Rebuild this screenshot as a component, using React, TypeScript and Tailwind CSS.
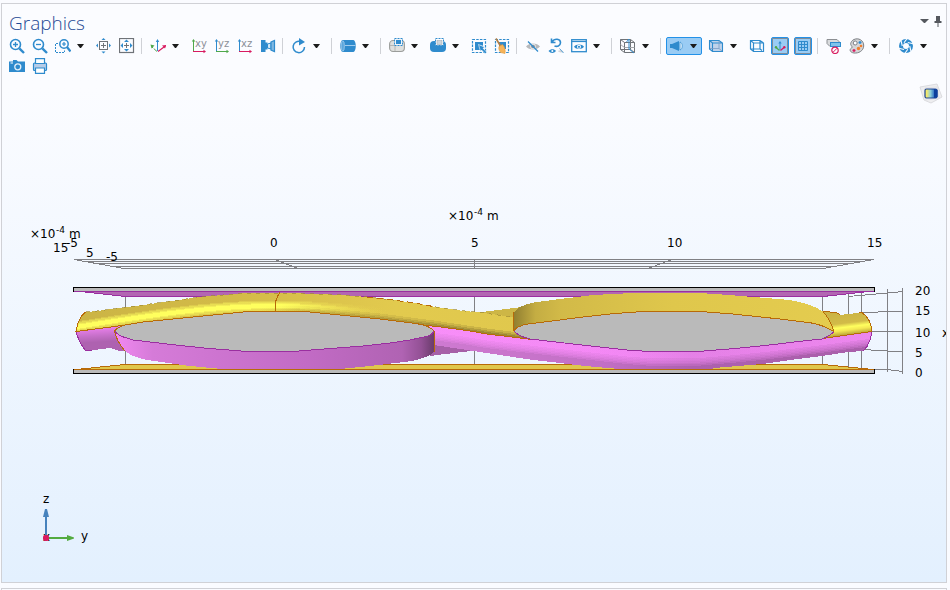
import type { ReactNode } from "react";

const BLUE = "#2f8bcd";
const GRAY = "#6f7378";
const GREEN = "#4fa84a";
const PINK = "#d81b60";

function Icon({ children }: { children: ReactNode }) {
  return (
    <svg viewBox="0 0 16 16" className="block size-4 shrink-0" fill="none" aria-hidden="true">
      {children}
    </svg>
  );
}

function Caret() {
  return (
    <svg viewBox="0 0 7 4" className="block h-1 w-[7px]" aria-hidden="true">
      <path d="M0 0H7L4 4H3Z" fill="#1c1c1c" />
    </svg>
  );
}

function Tool({ label, children }: { label: string; children: ReactNode }) {
  return (
    <button type="button" aria-label={label} className="flex h-5 w-[23px] items-center justify-center">
      {children}
    </button>
  );
}

function Split({ label, children }: { label: string; children: ReactNode }) {
  return (
    <div className="flex">
      <Tool label={label}>{children}</Tool>
      <button type="button" aria-label={`${label} options`} className="flex h-5 w-[18px] items-center pl-[3px]">
        <Caret />
      </button>
    </div>
  );
}

function Toggle({ label, children }: { label: string; children: ReactNode }) {
  return (
    <button type="button" aria-label={label} aria-pressed="true" className="flex h-5 w-[23px] items-center justify-center">
      <span className="flex size-[18px] items-center justify-center rounded-[2px] border border-[#2391e8] bg-[#9accf4]">
        {children}
      </span>
    </button>
  );
}

function Separator() {
  return (
    <div className="flex h-5 w-2 items-center pl-[3px]">
      <div className="h-4 w-px bg-[#cfd1d6]" />
    </div>
  );
}

function Lens({ minus }: { minus?: boolean }) {
  return (
    <>
      <circle cx="6.5" cy="6.5" r="5" stroke={BLUE} strokeWidth="1.6" />
      <path d="M10.3 10.3L15 15" stroke={BLUE} strokeWidth="2.4" />
      <path d={minus ? "M4 6.5H9" : "M4 6.5H9M6.5 4V9"} stroke={BLUE} strokeWidth="1.3" />
    </>
  );
}

function PlaneAxes({ name, up, across }: { name: string; up: string; across: string }) {
  return (
    <svg viewBox="0 0 16 16" className="block size-4 overflow-visible" fill="none" aria-hidden="true">
      <path d="M2.5 13V2" stroke={up} />
      <path d="M0.8 3.5L2.5 1L4.2 3.5Z" fill={up} />
      <path d="M2 13.5H14" stroke={across} />
      <path d="M12.5 11.8L15 13.5L12.5 15.2Z" fill={across} />
      <text x="4" y="9" fontSize="10" fontFamily="DejaVu Sans, sans-serif" fill="#8b9097">
        {name}
      </text>
    </svg>
  );
}

function Toolbar() {
  return (
    <div role="toolbar" aria-label="Graphics toolbar" className="flex flex-wrap pl-[3px]">
      <Tool label="Zoom in">
        <Icon><Lens /></Icon>
      </Tool>
      <Tool label="Zoom out">
        <Icon><Lens minus /></Icon>
      </Tool>
      <Split label="Zoom box">
        <Icon>
          <path d="M3 5.5H0.5V14.5H9.5V12.5" stroke={BLUE} strokeDasharray="2 1" />
          <circle cx="9" cy="6" r="4.2" stroke={BLUE} strokeWidth="1.5" />
          <path d="M12 9L15.5 13.5" stroke={BLUE} strokeWidth="2.2" />
          <path d="M7 6H11M9 4V8" stroke={BLUE} strokeWidth="1.2" />
        </Icon>
      </Split>
      <Tool label="Zoom selected">
        <Icon>
          <rect x="3.5" y="3.5" width="8" height="8" stroke={GRAY} />
          <path d="M5 7.5H10M7.5 5V10" stroke={GRAY} />
          <path d="M5.500 2L7.500 0L9.500 2ZM5.500 13.500H9.500L7.500 15.500ZM2 5.500L0 7.500L2 9.500ZM13 5.500L15 7.500L13 9.500Z" fill={BLUE} />
        </Icon>
      </Tool>
      <Tool label="Zoom extents">
        <Icon>
          <rect x="0.5" y="0.5" width="14" height="14" stroke={GRAY} strokeWidth="1.2" />
          <path d="M5 7.500H10M7.500 5V10" stroke={GRAY} />
          <path d="M5 4L7.500 1.500L10 4ZM5 11H10L7.500 13.500ZM4 5L1.500 7.500L4 10ZM11 5L13.500 7.500L11 10Z" fill={BLUE} />
        </Icon>
      </Tool>
      <Separator />
      <Split label="Default view">
        <Icon>
          <path d="M7.5 13V3" stroke={BLUE} />
          <path d="M5.8 4L7.5 1L9.2 4Z" fill={BLUE} />
          <path d="M7 13.500L2 9" stroke={GREEN} strokeDasharray="4 1" />
          <path d="M0.5 6.5L4.5 7.5L1.5 10.5Z" fill={GREEN} />
          <path d="M8 13.500L14 9" stroke={PINK} strokeWidth="1.2" />
          <path d="M16.5 6.8L15 10.5L12 7.5Z" fill={PINK} />
        </Icon>
      </Split>
      <Tool label="XY view"><PlaneAxes name="xy" up={GREEN} across={PINK} /></Tool>
      <Tool label="YZ view"><PlaneAxes name="yz" up={BLUE} across={GREEN} /></Tool>
      <Tool label="XZ view"><PlaneAxes name="xz" up={BLUE} across={PINK} /></Tool>
      <Tool label="View camera">
        <Icon>
          <path d="M1 2H5.500V4.500H7.500V11.500H5.500V14H1Z" fill={BLUE} />
          <path d="M7.500 6L11 5V11L7.500 10Z" fill="#d3e8f7" stroke={BLUE} />
          <path d="M11 4L14.500 2.500V13.500L11 12Z" fill="#7fb8e2" stroke={BLUE} strokeWidth="1.2" />
        </Icon>
      </Tool>
      <Separator />
      <Split label="Rotate">
        <Icon>
          <path d="M9.500 3.500A5.700 5.700 0 1 0 13.500 9" stroke={BLUE} strokeWidth="1.500" />
          <path d="M8 0L14 4L8 7.500Z" fill={BLUE} />
        </Icon>
      </Split>
      <Separator />
      <Split label="Select objects">
        <Icon>
          <path d="M2.500 2H13.500C16.500 3 16.500 13 13.500 14H2.500C-0.500 13 -0.500 3 2.500 2Z" fill={BLUE} />
          <ellipse cx="2.8" cy="8" rx="1.6" ry="5.3" fill="#5ba6dc" stroke="#a9d1ef" strokeWidth="0.7" />
          <path d="M5 7.5H15.5" stroke="#9fcbed" />
        </Icon>
      </Split>
      <Separator />
      <Split label="Select box">
        <Icon>
          <rect x="0.600" y="2.500" width="14.800" height="11" rx="3.500" fill="#dfe0de" stroke="#9b9d9b" strokeWidth="1.1" />
          <path d="M1 7.500H6V13" stroke="#b4b6b4" />
          <rect x="5.500" y="0.500" width="8" height="7" fill="#eef4f9" stroke={BLUE} strokeDasharray="2 1" />
          <rect x="7" y="2" width="5" height="4" fill={BLUE} />
        </Icon>
      </Split>
      <Split label="Select domains">
        <Icon>
          <rect x="0" y="3" width="16" height="11" rx="4" fill={BLUE} />
          <rect x="5.500" y="0.500" width="8" height="7" fill="#fff" stroke={BLUE} strokeDasharray="2 1" />
          <rect x="7" y="2.500" width="5" height="4" fill="#cfd6dc" stroke="#a3adb5" strokeWidth="0.600" />
        </Icon>
      </Split>
      <Tool label="Select and add">
        <Icon>
          <rect x="1.5" y="1.5" width="13" height="13" stroke={BLUE} strokeWidth="1.2" strokeDasharray="2.5 1.2" />
          <path d="M4 4H12V8L8 7L10 12H4Z" fill={BLUE} />
          <path d="M7.500 6.500L14 9.200L12 10.200L15.800 14.200L14.200 15.800L10.500 12L9.500 13.500Z" fill={BLUE} stroke="#fff" strokeWidth="0.600" />
        </Icon>
      </Tool>
      <Tool label="Clear selection">
        <Icon>
          <rect x="1.5" y="1.5" width="13" height="13" stroke={BLUE} strokeWidth="1.2" strokeDasharray="2.5 1.2" />
          <rect x="5" y="4" width="7" height="7" fill={BLUE} />
          <path d="M2 0.5L6.500 8" stroke="#b47f45" strokeWidth="1.700" />
          <path d="M5 8.500L8.500 6.500C11 9 11.500 12 11 15.500L6.500 14.500C5 12 4.500 11 5 8.500Z" fill="#f6b45a" stroke="#e09a3e" strokeWidth="0.6" />
        </Icon>
      </Tool>
      <Separator />
      <Tool label="Hide">
        <Icon>
          <path d="M1 8.5C4 4.5 12 4.5 15 8.5C12 12.5 4 12.5 1 8.5Z" fill="#b7b9bc" />
          <circle cx="8" cy="8.5" r="2.4" fill="#8e9195" stroke="#f2f3f5" />
          <path d="M3 3.5L13 13.5" stroke={BLUE} strokeWidth="1.2" />
        </Icon>
      </Tool>
      <Tool label="Reset hiding">
        <Icon>
          <path d="M3.500 0.500V4.500H7.500M4 4C6.500 0 12.500 0.500 12.500 4.800C12.300 8.200 9 9 6.500 8" stroke={BLUE} strokeWidth="1.600" />
          <path d="M0.5 13C2.5 10.5 6.5 10.5 8 13C6 15.5 2.5 15.5 0.5 13Z" fill={BLUE} />
          <circle cx="4.300" cy="13" r="1" fill="#fff" />
          <path d="M10 13C11 11.800 14 11.800 15.500 13.500C14 14.800 11 14.800 10 13Z" fill="#d3d5d8" />
          <path d="M11.500 10.500L15.500 15" stroke={BLUE} strokeWidth="0.800" />
        </Icon>
      </Tool>
      <Split label="View hidden">
        <Icon>
          <rect x="0.7" y="1.7" width="14.6" height="12" stroke={BLUE} strokeWidth="1.3" />
          <path d="M0.5 3.5H15.5" stroke={BLUE} strokeWidth="1.2" />
          <path d="M3 8.8C5 5.8 11 5.8 13 8.8C11 11.8 5 11.8 3 8.8Z" fill={BLUE} />
          <circle cx="8" cy="8.8" r="2" fill="#fff" />
          <circle cx="8" cy="8.8" r="1.1" fill={BLUE} />
        </Icon>
      </Split>
      <Separator />
      <Split label="Clipping">
        <Icon>
          <path d="M0.500 1.500H10.500V11.500H0.500ZM4.500 4.500H14.500V14.500H4.500ZM0.500 1.500L4.500 4.500M10.500 1.500L14.500 4.500M10.500 11.500L14.500 14.500M0.500 11.500L4.500 14.500" stroke={GRAY} />
          <path d="M0.500 6.500L4.500 9.500H14.500" stroke="#a5a8ac" />
          <path d="M6.500 4L9 1V11L14 15" stroke={BLUE} />
        </Icon>
      </Split>
      <Separator />
      <div className="mt-px mr-0.5 ml-px flex h-[18px] w-9 rounded-[2px] border border-[#2391e8] bg-[#9accf4]">
        <button type="button" aria-label="Scene light" aria-pressed="true" className="flex w-5 items-center justify-center">
          <Icon>
            <path d="M1 6H3L10 3V13L3 10H1Z" fill={BLUE} />
            <path d="M11 4C14 5 14 11 11 12Z" fill="#e8f4fd" stroke={BLUE} strokeWidth="0.7" />
          </Icon>
        </button>
        <button type="button" aria-label="Scene light options" className="flex flex-1 items-center pl-[3px]">
          <Caret />
        </button>
      </div>
      <Split label="Transparency">
        <Icon>
          <path d="M1 2.5H11L14.5 5V13.5H4.5L1 11Z" fill="#bfd2ea" />
          <path d="M1.5 2.5H11L14.5 5V13.5H4.5L1.5 11ZM1.5 2.5L4.5 5H14.5M4.5 5V13.5" stroke={BLUE} strokeWidth="1.1" />
          <path d="M2 10.5H11V3M11 10.5L14 13" stroke="#7a9cc4" strokeWidth="0.8" />
        </Icon>
      </Split>
      <Tool label="Wireframe rendering">
        <Icon>
          <path d="M1.5 2.5H11L14.5 5V13.5H4.5L1.5 11ZM1.5 2.5L4.5 5H14.5M4.5 5V13.5M1.5 11H11V2.5M11 11L14.5 13.5" stroke={BLUE} strokeWidth="1.2" />
        </Icon>
      </Tool>
      <Toggle label="Show axis orientation">
        <Icon>
          <rect x="0.5" y="0.5" width="15" height="15" stroke="#7e8c9a" />
          <path d="M8 12V5" stroke={BLUE} />
          <path d="M6.3 5.5L8 3L9.7 5.5Z" fill={BLUE} />
          <path d="M7.5 12.5L4 9.5" stroke={GREEN} strokeWidth="1.2" />
          <circle cx="4" cy="9.3" r="1.2" fill={GREEN} />
          <path d="M8.5 12.5L12 9.5" stroke={PINK} strokeWidth="1.2" />
          <circle cx="12.3" cy="9.3" r="1.2" fill={PINK} />
        </Icon>
      </Toggle>
      <Toggle label="Show grid">
        <Icon>
          <rect x="0.5" y="0.5" width="15" height="15" stroke="#7e8c9a" />
          <path d="M3.5 3.5H12.5V12.5H3.5ZM6.5 3.5V12.5M9.5 3.5V12.5M3.5 6.5H12.5M3.5 9.5H12.5" stroke={BLUE} />
        </Icon>
      </Toggle>
      <Separator />
      <Tool label="Disable plot">
        <Icon>
          <path d="M1 1.5H11L14 4.5V8.5H4L1 5.5Z" fill="#d9dbdd" stroke="#8c8f93" />
          <rect x="4.500" y="4.500" width="10" height="4" fill="#7ec4ec" stroke={BLUE} />
          <circle cx="9" cy="12.3" r="3.2" fill="#fff" stroke={PINK} strokeWidth="1.2" />
          <path d="M7 14.3L11 10.3" stroke={PINK} />
        </Icon>
      </Tool>
      <Split label="Colour theme">
        <Icon>
          <path d="M5 1.5C9 -0.5 15 2 14.7 8C14.4 13 9.5 15.5 5 15C1 14.5 0 11.5 2.5 10C4.5 8.5 0.5 7.5 2 4.5C2.7 3 3.5 2.2 5 1.5Z" fill="#d5d6d8" stroke="#7d8085" />
          <circle cx="6.2" cy="5" r="2" fill="#fff" stroke="#7d8085" />
          <path d="M11 3V6M9.5 4.5H12.5" stroke={BLUE} strokeWidth="1.3" />
          <circle cx="9.5" cy="10.5" r="1.7" fill="#f07f2e" />
          <circle cx="12" cy="8" r="1.3" fill="#f07f2e" />
          <path d="M5 11V14M3.5 12.5H6.5" stroke={PINK} strokeWidth="1.3" />
        </Icon>
      </Split>
      <Separator />
      <Split label="Image snapshot">
        <Icon>
          <circle cx="8" cy="8" r="5" stroke={BLUE} strokeWidth="4" />
          <path d="M6 4.8L9.5 0M9.8 4.5L15.2 5.8M11.7 8L13 13.5M9.8 11.2L6.5 16M6 11.5L0.8 10.2M4.3 8L3 2.5" stroke="#fbfcff" strokeWidth="1.1" />
        </Icon>
      </Split>
      <Tool label="Snapshot">
        <Icon>
          <path d="M0 3.5H4V2H7.5L9 3.5H16V14H0Z" fill={BLUE} />
          <circle cx="8.8" cy="8.8" r="3" stroke="#e2f0fa" strokeWidth="1.3" />
          <path d="M1.5 5H4" stroke="#fff" />
        </Icon>
      </Tool>
      <Tool label="Print">
        <Icon>
          <rect x="1.5" y="5" width="13" height="7.5" rx="1" fill="#b7cde8" stroke={BLUE} strokeWidth="1.2" />
          <path d="M3.5 0.7H12.5V5.5H3.5ZM3.5 10H12.5V15.3H3.5Z" fill="#fff" stroke={BLUE} strokeWidth="1.2" />
        </Icon>
      </Tool>
    </div>
  );
}

const ARCH_ONE_TOP = "M86 312L97 311L143 305L200 297L240 293.5L260 293H290L303 293.5L343 295L367 297L393 300L415 303L433 306.5L460 310.5L480 312.5L513 317";
const LENS_ONE_TOP = "M114.5 331Q117 327.500 125 325L143 322L190 317.300L223 314L243 312L267 311H300L320 313L340 315L380 319L410 322.700L423 324.700Q431 327.500 434 331";
const LENS_ONE_BOTTOM = "M114.500 331Q118 335 122 336.500L133 340L173 344.700L207 348.300L245 351.300H295L333 348.300L363 346L388 343.300L410 340L427 336.300Q433 334 434 331";
const LENS_TWO_TOP = "M514 331Q515 328.500 518 327Q523 324.500 530 323.700L560 320L580 317.300L613 313.700L643 311.500H700L733 314L777 318.700L810 322.700Q822 324.500 834 331.500";
const LENS_TWO_BOTTOM = "M514 331Q518 336 530 339L567 343.300L603 347.300L627 350L647 351.300H700L733 348.700L767 345.300L800 341.300L822 339Q830 336 834 331.500";
const ARM_TOP = "M423 325L437 326.500L467 330.500L487 334L512 337L530 339L567 343.300L603 347.300L627 350L647 351.500H700L733 348.700L767 345.300L800 341.300L823 338.500L872 332";
const ARM_SHAPE = "M423 325L437 326.500L467 330.500L487 334L512 337L530 339L567 343.300L603 347.300L627 350L647 351.500H700L733 348.700L767 345.300L800 341.300L823 338.500L872 332L870 340L867 346.500L863 351L848 352L822 356L790 360L762 364L720 367.500L705 369.500H625L585 366L560 363L533 360L480 352L434 345V331Z";
const ARCH_ONE_SHAPE = "M86 312L97 311L143 305L200 297L240 293.500L260 293H290L303 293.500L343 295L367 297L393 300L415 303L433 306.500L460 310.500L480 312.500L513 317L514 331Q520 336 532 339L512 337L487 334L467 330.500L437 326.500L410 322.700L380 319L340 315L300 311H267L243 312L223 314L190 317.300L143 322L125 325L113 326.700L76 331.500L78 323Q81 315 86 312Z";
const ARCH_ONE_RIDGE = "M70 328C140 317 205 306 276 306C340 306 400 315 530 331";
const ARCH_ONE_SHADE = "M240 311H300L340 315L380 319L437 326.500L487 334L535 340";

function Woven() {
  return (
    <g>
      {/* inner faces of the plates */}
      <path d="M76 291L125 296.500H823L873 291Z" fill="#b266b2" stroke="#9a2fa0" />
      <path d="M76 369.500L125 364.500H823L873 369.500Z" fill="#dfc74c" stroke="#b86a08" />

      {/* far ends of the fibres */}
      <path d="M478 312.500L522 307V322H513V317Z" fill="#cdb646" />
      <path d="M434 345L475 350.500L437 355L430 356Z" fill="#a660a8" />

      {/* violet fibre, left end */}
      <path d="M76 331.500L122 325L114.500 331Q116 342 125 351L118 350.500L110 348L86 351Q79 343 76 331.500Z" fill="url(#violetEnd)" />
      <path d="M76 331.500Q79 343 86 351L92 350.500" fill="none" stroke="#9a2fa0" />

      {/* violet fibre crossing to the right */}
      <path d={ARM_SHAPE} fill="url(#violetArm)" />
      <g clipPath="url(#armClip)" fill="none" stroke="url(#violetGlow)" strokeOpacity="0.22">
        <path d={ARM_TOP} strokeWidth="28" />
        <path d={ARM_TOP} strokeWidth="25" />
        <path d={ARM_TOP} strokeWidth="22" />
        <path d={ARM_TOP} strokeWidth="19" />
        <path d={ARM_TOP} strokeWidth="16" />
        <path d={ARM_TOP} strokeWidth="13" strokeOpacity="0.5" />
      </g>
      <path d="M872 332L870 340L867 346.500L863 351" fill="none" stroke="#9a2fa0" />

      {/* violet arch under the left lens */}
      <path
        d="M114.500 331L117 338Q120 346 125 351Q132 357 147 360L173 363.700L187 365.700L222 369H340L370 366L393 363.300L410 361.300Q428 358 434 352V331Z"
        fill="url(#violetBelly)"
      />
      <path d={LENS_ONE_TOP} fill="#bababa" />
      <path d={LENS_ONE_BOTTOM} fill="#bababa" stroke="#9a2fa0" />

      {/* yellow fibre, left to centre */}
      <path d={ARCH_ONE_SHAPE} fill="url(#yellowArch)" />
      <g clipPath="url(#archClip)" fill="none">
        <g stroke="url(#yellowGlow)">
          <path d={ARCH_ONE_RIDGE} strokeWidth="11" strokeOpacity="0.25" />
          <path d={ARCH_ONE_RIDGE} strokeWidth="9" strokeOpacity="0.35" />
          <path d={ARCH_ONE_RIDGE} strokeWidth="6" strokeOpacity="0.5" />
          <path d={ARCH_ONE_RIDGE} strokeWidth="4" />
        </g>
        <g stroke="url(#yellowShade)">
          <path d={ARCH_ONE_SHADE} strokeWidth="11" strokeOpacity="0.25" />
          <path d={ARCH_ONE_SHADE} strokeWidth="7" strokeOpacity="0.35" />
          <path d={ARCH_ONE_SHADE} strokeWidth="4" strokeOpacity="0.5" />
        </g>
      </g>
      <path d={ARCH_ONE_TOP} fill="none" stroke="#a08a34" strokeDasharray="4 5" strokeOpacity="0.7" />
      <path d="M86 312Q81 315 78 323L76 331.500L113 326.700L125 325" fill="none" stroke="#b86a08" />
      <path d={LENS_ONE_TOP} fill="none" stroke="#b86a08" />
      <path d="M423 325L437 326.500L467 330.500L487 334L512 337L532 339.500" fill="none" stroke="#b86a08" />
      <path d="M367 297L393 300L415 303L433 306.500" fill="none" stroke="#b86a08" strokeDasharray="6 4" />
      <path d="M275.500 311V302Q277 296 280 292.500" fill="none" stroke="#b86a08" />
      <path d="M114.500 331Q117 342 125 351" fill="none" stroke="#b86a08" />
      <path d="M434.500 331V352" stroke="#b86a08" strokeWidth="1" />

      {/* yellow fibre, right end */}
      <path d="M823 311L836 312.500L840 315L862 312.500Q871 319 872 332L823 338.500Z" fill="url(#yellowEnd)" />
      <path d="M823 311.500L836 312.500L840 314.500M859 312.500H862Q871 319 872 331.500L823 338.500" fill="none" stroke="#b86a08" />

      {/* yellow arch over the right lens */}
      <path
        d="M513 313L520 307Q526 304 535 302.300L560 299L580 296.700L593 295L633 293H700L733 295.300L757 297.300L790 300Q812 304 823 311.500Q830 319 834 331.500L777 322H560L514 331Z"
        fill="url(#yellowBack)"
      />
      <path d={LENS_TWO_BOTTOM} fill="#bababa" stroke="#9a2fa0" />
      <path d={LENS_TWO_TOP} fill="#bababa" stroke="#b86a08" />
      <path d="M823 311.500Q830 319 834 331.500M513.500 312V331" fill="none" stroke="#b86a08" />
    </g>
  );
}

function Scene() {
  return (
    <svg
      viewBox="2 76 944 506"
      role="img"
      aria-label="3D view of the woven geometry"
      className="block h-auto w-full font-['DejaVu_Sans',sans-serif] text-[12px]"
    >
      <defs>
        <linearGradient id="violetEnd" x1="0" y1="0" x2="0.12" y2="1">
          <stop offset="0.15" stopColor="#ea80ec" />
          <stop offset="0.45" stopColor="#c770ca" />
          <stop offset="0.7" stopColor="#ae62b0" />
        </linearGradient>
        <linearGradient id="violetArm" x1="0" y1="0" x2="1" y2="0">
          <stop offset="0" stopColor="#cf7bd2" />
          <stop offset="0.4" stopColor="#c26fc5" />
          <stop offset="0.6" stopColor="#ad61af" />
          <stop offset="1" stopColor="#a95fab" />
        </linearGradient>
        <linearGradient id="violetGlow" x1="0" y1="0" x2="1" y2="0">
          <stop offset="0" stopColor="#ff92ff" />
          <stop offset="0.45" stopColor="#fb8cfc" />
          <stop offset="0.6" stopColor="#ee86f0" />
          <stop offset="1" stopColor="#f88df9" />
        </linearGradient>
        <linearGradient id="violetBelly" x1="0" y1="0" x2="1" y2="0">
          <stop offset="0" stopColor="#f288f2" />
          <stop offset="0.12" stopColor="#d57bd8" />
          <stop offset="0.6" stopColor="#c26bc5" />
          <stop offset="0.9" stopColor="#b063b3" />
          <stop offset="0.96" stopColor="#935195" />
          <stop offset="1" stopColor="#6a3c6c" />
        </linearGradient>
        <linearGradient id="yellowArch" x1="0" y1="0" x2="1" y2="0">
          <stop offset="0" stopColor="#cbb445" />
          <stop offset="0.35" stopColor="#d3bb48" />
          <stop offset="0.7" stopColor="#e2ca4e" />
          <stop offset="1" stopColor="#e0c84d" />
        </linearGradient>
        <linearGradient id="yellowGlow" gradientUnits="userSpaceOnUse" x1="76" y1="0" x2="390" y2="0">
          <stop offset="0" stopColor="#ffff5e" />
          <stop offset="0.65" stopColor="#ffff5e" />
          <stop offset="1" stopColor="#e6d04f" stopOpacity="0" />
        </linearGradient>
        <linearGradient id="yellowShade" gradientUnits="userSpaceOnUse" x1="260" y1="0" x2="480" y2="0">
          <stop offset="0" stopColor="#86722c" stopOpacity="0" />
          <stop offset="1" stopColor="#86722c" />
        </linearGradient>
        <linearGradient id="yellowBack" x1="0" y1="0" x2="1" y2="0">
          <stop offset="0" stopColor="#8f7d30" />
          <stop offset="0.07" stopColor="#c4ad43" />
          <stop offset="0.15" stopColor="#d2ba48" />
          <stop offset="0.5" stopColor="#dfc74c" />
          <stop offset="1" stopColor="#e4cc4f" />
        </linearGradient>
        <linearGradient id="yellowEnd" gradientUnits="userSpaceOnUse" x1="846" y1="312" x2="849" y2="336">
          <stop offset="0" stopColor="#cbb445" />
          <stop offset="0.45" stopColor="#d2bb48" />
          <stop offset="0.62" stopColor="#ffff5e" />
          <stop offset="0.75" stopColor="#f4e854" />
          <stop offset="1" stopColor="#a88f2e" />
        </linearGradient>
        <linearGradient id="cube" x1="0" y1="0" x2="1" y2="0">
          <stop offset="0.15" stopColor="#f5e96a" />
          <stop offset="0.45" stopColor="#8fd0d8" />
          <stop offset="0.85" stopColor="#1557c0" />
        </linearGradient>
        <clipPath id="armClip"><path d={ARM_SHAPE} /></clipPath>
        <clipPath id="archClip"><path d={ARCH_ONE_SHAPE} /></clipPath>
      </defs>

      {/* grid */}
      <g stroke="#808084" fill="none" shapeRendering="crispEdges">
        <path d="M74 259.500H874M85 261.500H863M96 263.500H852M113 266.500H836M124 268.500H823" />
        <path d="M74 259.500L124 268.500M874 259.500L823 268.500M275 259.500L298 268.500M474.500 259V269M672 259.500L648 268.500" />
        <path d="M125.500 296V365M474.500 296V365M822.500 296V365M848.500 293V368M861.500 292V369M887.500 289V372M902.500 288V374" />
        <path d="M848 296.500L887 293L903 291.500M861 313L887 311.500L903 311M870 331.500H903M863 349.500L887 351L903 351.500M874 369.500H887L903 371.500" />
      </g>

      <g shapeRendering="crispEdges"><Woven /></g>

      {/* plates */}
      <g shapeRendering="crispEdges" fill="none">
        <path d="M73 287H875V291H73ZM73 370H875V374H73Z" fill="#bababa" />
        <path d="M73.500 292V287.500H874.500V292M73.500 369V373.500H874.500V369" stroke="#000" />
        <path d="M74 291.500H874" stroke="#9a2fa0" />
        <path d="M74 369.500H874" stroke="#b86a08" />
      </g>

      {/* axis labels */}
      <g fill="#000">
        <text x="448" y="220">×10</text>
        <text x="474" y="215" fontSize="9">-4</text>
        <text x="487" y="220">m</text>
        <text x="30" y="238">×10</text>
        <text x="56" y="233" fontSize="9">-4</text>
        <text x="69" y="238">m</text>
        <text x="53" y="252">15</text>
        <text x="66" y="247">-5</text>
        <text x="86" y="257">5</text>
        <text x="106" y="261">-5</text>
        <text x="270" y="247">0</text>
        <text x="471" y="247">5</text>
        <text x="667" y="247">10</text>
        <text x="867" y="247">15</text>
        <text x="915" y="295">20</text>
        <text x="915" y="315">15</text>
        <text x="915" y="337">10</text>
        <text x="915" y="357">5</text>
        <text x="915" y="377">0</text>
        <text x="942" y="337">x</text>
      </g>

      {/* orientation triad */}
      <text x="43" y="503">z</text>
      <text x="81" y="540">y</text>
      <text x="43" y="541">x</text>
      <path d="M46 538V516" stroke="#4682bd" strokeWidth="2" />
      <path d="M43 517L45 509H47L49 517Z" fill="#4682bd" />
      <path d="M46 538H68" stroke="#53ab40" strokeWidth="2" />
      <path d="M67 535L74 537.500V538.500L67 541Z" fill="#53ab40" />
      <rect x="43" y="535" width="6" height="6" rx="2" fill="#d81b60" />

      {/* product mark */}
      <path d="M920 87L937 84L942 97L931 103L924 100Z" fill="#eeeef0" stroke="#dcdce0" />
      <path d="M925 88L937 87L939 98L926 100Z" fill="#f6f6f8" stroke="#d6d6da" strokeWidth="0.6" />
      <rect x="925" y="89" width="12" height="9" rx="1.500" fill="url(#cube)" stroke="#1c4390" strokeWidth="1.200" />
      <path d="M934 89L937.500 90V97L934 98Z" fill="#0d3f9c" />
    </svg>
  );
}

export default function App() {
  return (
    <div className="flex h-screen flex-col gap-[5px] overflow-hidden bg-[#fafbff] pt-[3px] pr-[3px] pl-px">
      <section className="flex min-h-0 flex-1 flex-col border border-[#d0d1d6] bg-linear-to-b from-[#fbfcff] from-15% to-[#e3f0fe] font-['Open_Sans',sans-serif]">
        <header className="flex h-8 items-start justify-between pr-1 pl-[7px]">
          <h1 className="pt-[5px] text-[19px] leading-7 font-light text-[#1f4a94]">Graphics</h1>
          <div className="flex items-center gap-[5px] pt-3">
            <button type="button" aria-label="Window menu">
              <svg viewBox="0 0 9 5" className="block h-[5px] w-[9px]" aria-hidden="true">
                <path d="M0 0H9L5 4H4Z" fill="#55585e" />
              </svg>
            </button>
            <button type="button" aria-label="Pin window">
              <svg viewBox="0 0 8 11" className="block h-[11px] w-2" aria-hidden="true">
                <path d="M2 0H6V5H7.500V7H0.500V5H2ZM3.500 7H4.500V11H3.500Z" fill="#55585e" />
              </svg>
            </button>
          </div>
        </header>
        <Toolbar />
        <Scene />
      </section>
      <section aria-label="Messages" className="h-0.5 border-x border-t border-[#d0d1d6]" />
    </div>
  );
}
